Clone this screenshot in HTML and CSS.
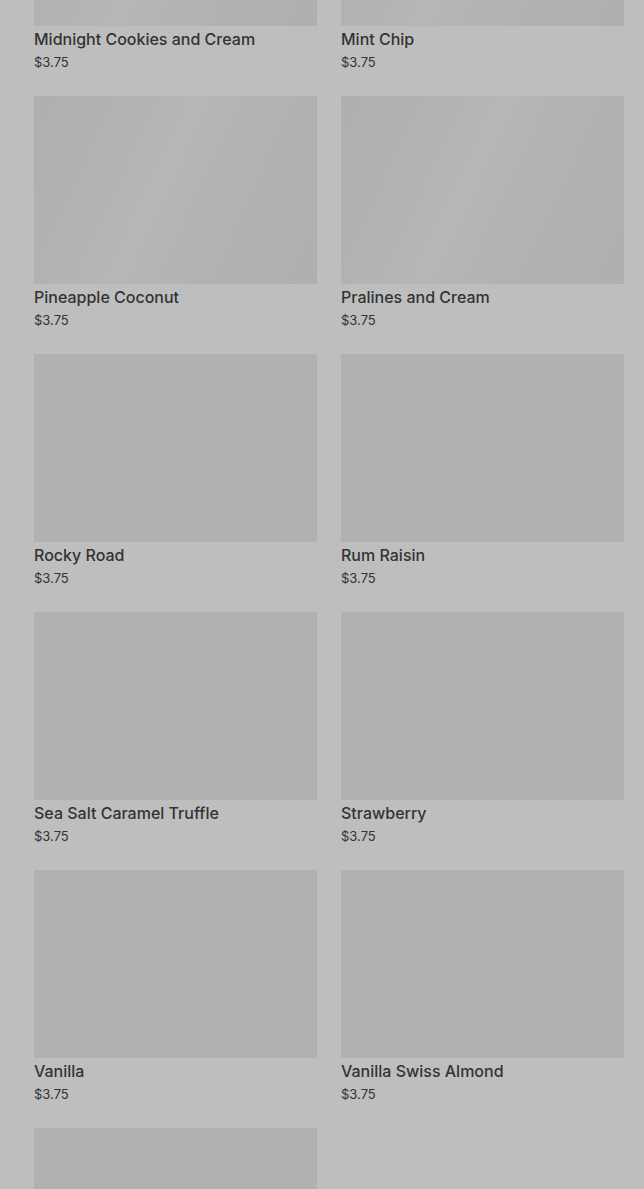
FILE: index.html
```html
<!DOCTYPE html>
<html>
<head>
<meta charset="utf-8">
<link rel="stylesheet" href="styles.css">
</head>
<body>
<main class="grid">
  <div class="card"><div class="thumb shimmer"></div><div class="name">Midnight Cookies and Cream</div><div class="price">$3.75</div></div>
  <div class="card"><div class="thumb shimmer"></div><div class="name">Mint Chip</div><div class="price">$3.75</div></div>
  <div class="card"><div class="thumb shimmer"></div><div class="name">Pineapple Coconut</div><div class="price">$3.75</div></div>
  <div class="card"><div class="thumb shimmer"></div><div class="name">Pralines and Cream</div><div class="price">$3.75</div></div>
  <div class="card"><div class="thumb"></div><div class="name">Rocky Road</div><div class="price">$3.75</div></div>
  <div class="card"><div class="thumb"></div><div class="name">Rum Raisin</div><div class="price">$3.75</div></div>
  <div class="card"><div class="thumb"></div><div class="name">Sea Salt Caramel Truffle</div><div class="price">$3.75</div></div>
  <div class="card"><div class="thumb"></div><div class="name">Strawberry</div><div class="price">$3.75</div></div>
  <div class="card"><div class="thumb"></div><div class="name">Vanilla</div><div class="price">$3.75</div></div>
  <div class="card"><div class="thumb"></div><div class="name">Vanilla Swiss Almond</div><div class="price">$3.75</div></div>
  <div class="card"><div class="thumb"></div><div class="name">Waffle Cone</div><div class="price">$3.75</div></div>
</main>
</body>
</html>
```
FILE: styles.css
```css
html, body {
  margin: 0;
  padding: 0;
  background: #bebebe;
  overflow: hidden;
}
body {
  font-family: Inter, "Liberation Sans", sans-serif;
  color: #333333;
}
.grid {
  display: grid;
  grid-template-columns: 283px 283px;
  column-gap: 24px;
  row-gap: 24px;
  padding: 0 20px 0 34px;
  margin-top: -162px;
}
.card {
  display: flex;
  flex-direction: column;
}
.thumb {
  height: 188px;
  background: #b1b1b1;
}
.shimmer {
  background: linear-gradient(115deg, #afafaf 0%, #b3b3b3 30%, #b7b7b7 45%, #b3b3b3 60%, #afafaf 100%);
}
.name {
  margin-top: 1px;
  font-size: 16px;
  font-weight: 500;
  line-height: 24px;
}
.price {
  margin-top: 1px;
  font-size: 13px;
  line-height: 20px;
}
```
